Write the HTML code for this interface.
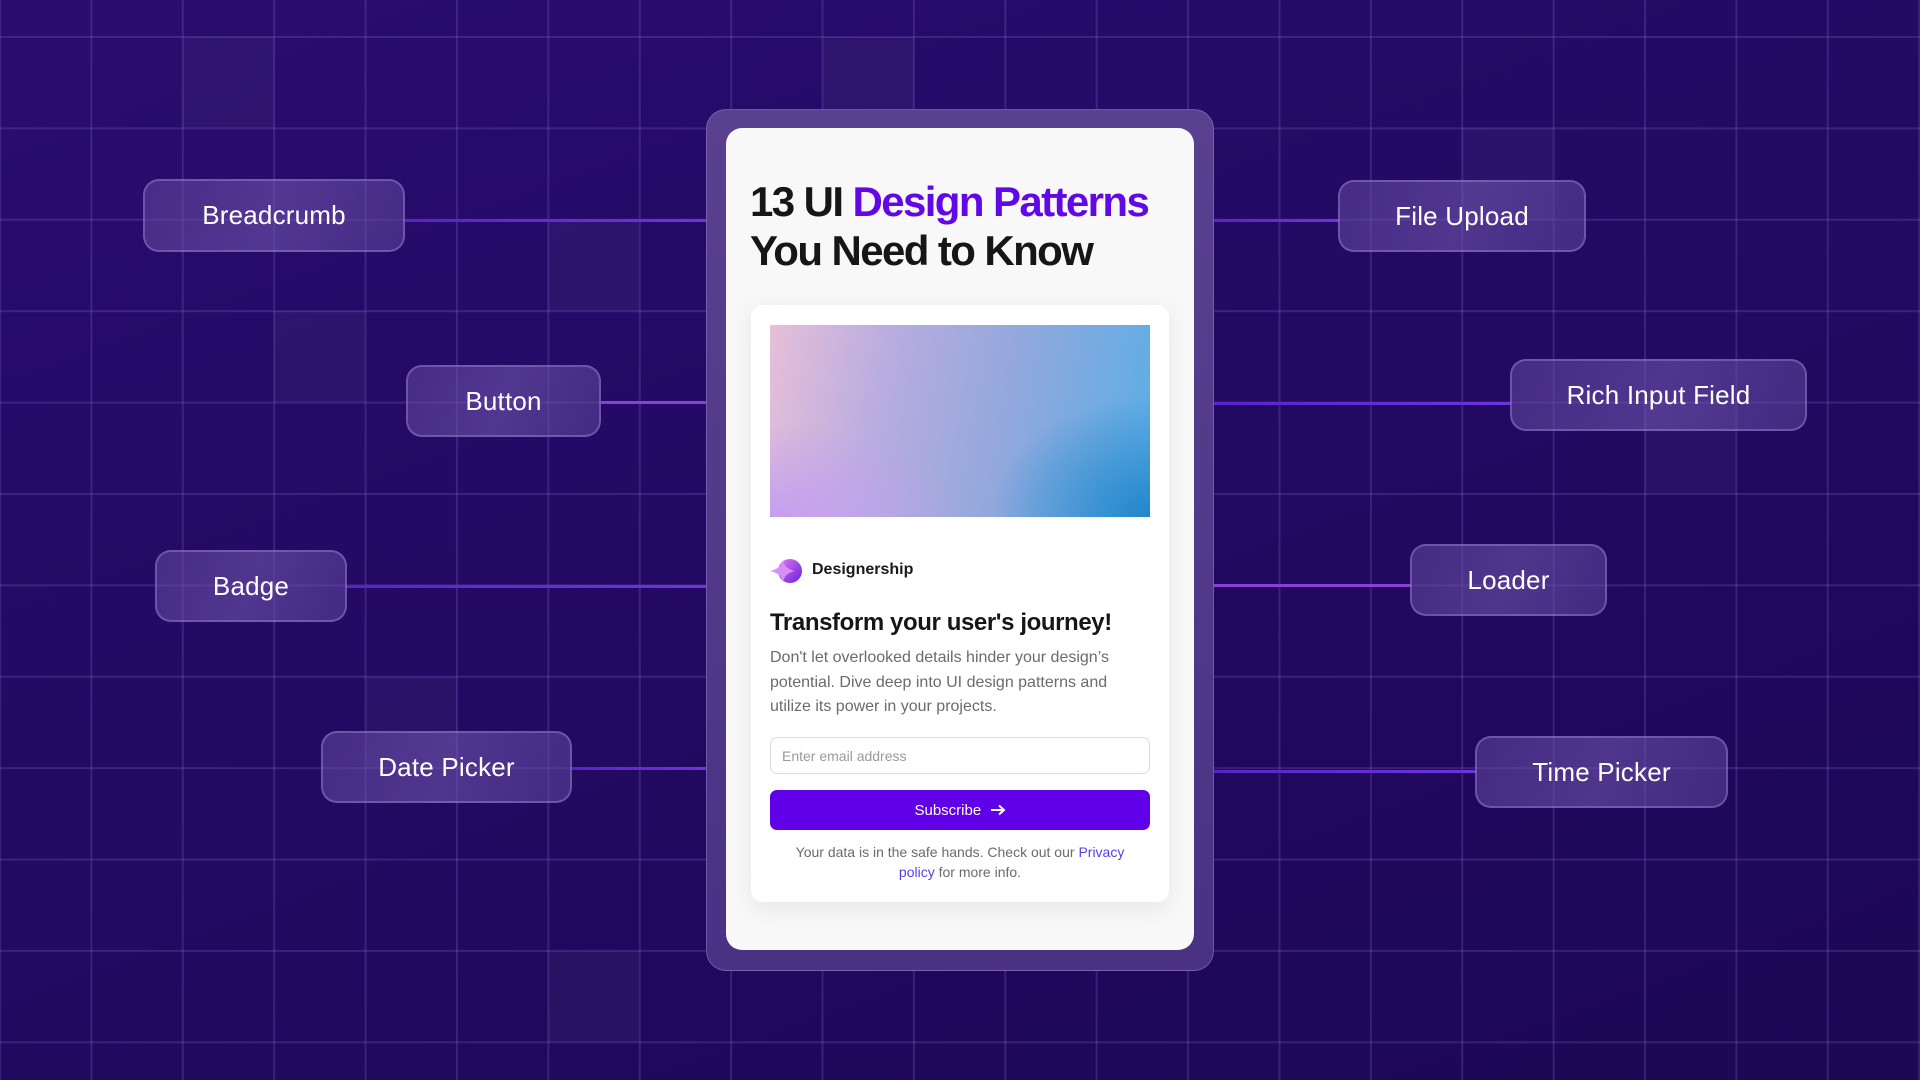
<!DOCTYPE html>
<html><head><meta charset="utf-8"><style>
*{margin:0;padding:0;box-sizing:border-box}
body{width:1920px;height:1080px;overflow:hidden;position:relative;font-family:"Liberation Sans",sans-serif;
background:linear-gradient(160deg,#2a0c6e 0%,#230964 45%,#1c0854 100%);}
.grid{position:absolute;inset:0;
background-image:linear-gradient(to right,rgba(160,130,230,.2) 2px,transparent 2px),linear-gradient(to bottom,rgba(160,130,230,.2) 2px,transparent 2px);
background-size:91.4px 91.4px;background-position:-1px 36px;}
.cell{position:absolute;width:91px;height:91px;background:rgba(255,255,255,.04)}
.line{position:absolute;height:3px;background:linear-gradient(90deg,#5a24c4,#6e34d8);}
.pill{position:absolute;border:2px solid rgba(190,170,240,.32);border-radius:16px;
background:linear-gradient(110deg,rgba(100,72,160,.55),rgba(112,84,172,.6) 50%,rgba(95,70,158,.55));
color:#fff;font-size:26px;display:flex;align-items:center;justify-content:center;letter-spacing:.2px}
.frame{position:absolute;left:706px;top:109px;width:508px;height:862px;border-radius:20px;
background:linear-gradient(180deg,#5a418f,#4a3183);border:1px solid rgba(180,150,240,.35)}
.card{position:absolute;left:726px;top:128px;width:468px;height:822px;border-radius:16px;background:#f8f8f8}
h1{position:absolute;left:750px;top:177px;font-size:42px;line-height:49px;font-weight:700;color:#161616;letter-spacing:-1.6px}
h1 span{color:#6208e6}
.inner{position:absolute;left:751px;top:305px;width:418px;height:597px;border-radius:12px;background:#fff;box-shadow:0 6px 24px rgba(0,0,0,.08)}
.img{position:absolute;left:770px;top:325px;width:380px;height:192px;
background:radial-gradient(ellipse 60% 90% at 100% 100%,#2386cc 0%,rgba(35,134,204,0) 70%),
radial-gradient(ellipse 70% 70% at 0% 100%,#c59ef0 0%,rgba(197,158,240,0) 70%),
linear-gradient(100deg,#e6bfd8 0%,#b8ace0 30%,#94a8dc 60%,#5aaee6 100%)}
.t{position:absolute;color:#161616}
</style></head><body>
<div class="grid"></div>
<div class="cell" style="left:183px;top:37px"></div>
<div class="cell" style="left:823px;top:37px"></div>
<div class="cell" style="left:548px;top:220px"></div>
<div class="cell" style="left:274px;top:311px"></div>
<div class="cell" style="left:1462px;top:128px"></div>
<div class="cell" style="left:1645px;top:402px"></div>
<div class="cell" style="left:366px;top:677px"></div>
<div class="cell" style="left:548px;top:951px"></div>

<div class="line" style="left:405px;width:302px;top:219px"></div>
<div class="line" style="left:601px;width:106px;top:401px;background:#8a40d8"></div>
<div class="line" style="left:346px;width:361px;top:585px"></div>
<div class="line" style="left:572px;width:135px;top:767px"></div>
<div class="line" style="left:1213px;width:126px;top:219px"></div>
<div class="line" style="left:1213px;width:298px;top:402px"></div>
<div class="line" style="left:1213px;width:198px;top:584px;background:#8a40d8"></div>
<div class="line" style="left:1213px;width:263px;top:770px"></div>

<div class="pill" style="left:143px;top:179px;width:262px;height:73px">Breadcrumb</div>
<div class="pill" style="left:406px;top:365px;width:195px;height:72px">Button</div>
<div class="pill" style="left:155px;top:550px;width:192px;height:72px">Badge</div>
<div class="pill" style="left:321px;top:731px;width:251px;height:72px">Date Picker</div>
<div class="pill" style="left:1338px;top:180px;width:248px;height:72px">File Upload</div>
<div class="pill" style="left:1510px;top:359px;width:297px;height:72px">Rich Input Field</div>
<div class="pill" style="left:1410px;top:544px;width:197px;height:72px">Loader</div>
<div class="pill" style="left:1475px;top:736px;width:253px;height:72px">Time Picker</div>

<div class="frame"></div>
<div class="card"></div>
<h1>13 UI <span>Design Patterns</span><br>You Need to Know</h1>
<div class="inner"></div>
<div class="img"></div>
<svg style="position:absolute;left:769px;top:558px" width="34" height="26" viewBox="0 0 34 26">
<defs><linearGradient id="g" x1="0" y1="0" x2="1" y2="1"><stop offset="0" stop-color="#e07af0"/><stop offset="1" stop-color="#6a1ee0"/></linearGradient></defs>
<circle cx="21" cy="13" r="12" fill="url(#g)"/>
<path d="M14 1 C15 8 18 11 26 13 C18 15 15 18 14 25 C13 18 9 15 1 13 C9 11 13 8 14 1Z" fill="#d690f5"/>
</svg>
<div class="t" style="left:812px;top:561px;font-size:16px;font-weight:700;color:#1a1a1a">Designership</div>
<div class="t" style="left:770px;top:609px;font-size:24px;font-weight:700;letter-spacing:-.4px">Transform your user's journey!</div>
<div class="t" style="left:770px;top:646px;width:370px;font-size:16px;line-height:24.5px;color:#6b6b6b">Don't let overlooked details hinder your design’s potential. Dive deep into UI design patterns and utilize its power in your projects.</div>
<div style="position:absolute;left:770px;top:737px;width:380px;height:37px;border:1px solid #ddd;border-radius:7px;background:#fff;font-size:14px;color:#9a9a9a;padding:10px 11px">Enter email address</div>
<div style="position:absolute;left:770px;top:790px;width:380px;height:40px;border-radius:7px;background:#5f00e8;color:#fff;font-size:15px;display:flex;align-items:center;justify-content:center">Subscribe&nbsp;&nbsp;<svg width="16" height="12" viewBox="0 0 16 12"><path d="M1 6H14M9 1.5L14 6L9 10.5" stroke="#fff" stroke-width="2" fill="none"/></svg></div>
<div class="t" style="left:782px;top:842px;width:356px;text-align:center;font-size:14px;line-height:20px;color:#6b6b6b">Your data is in the safe hands. Check out our <span style="color:#5b3bf0">Privacy policy</span> for more info.</div>
</body></html>
